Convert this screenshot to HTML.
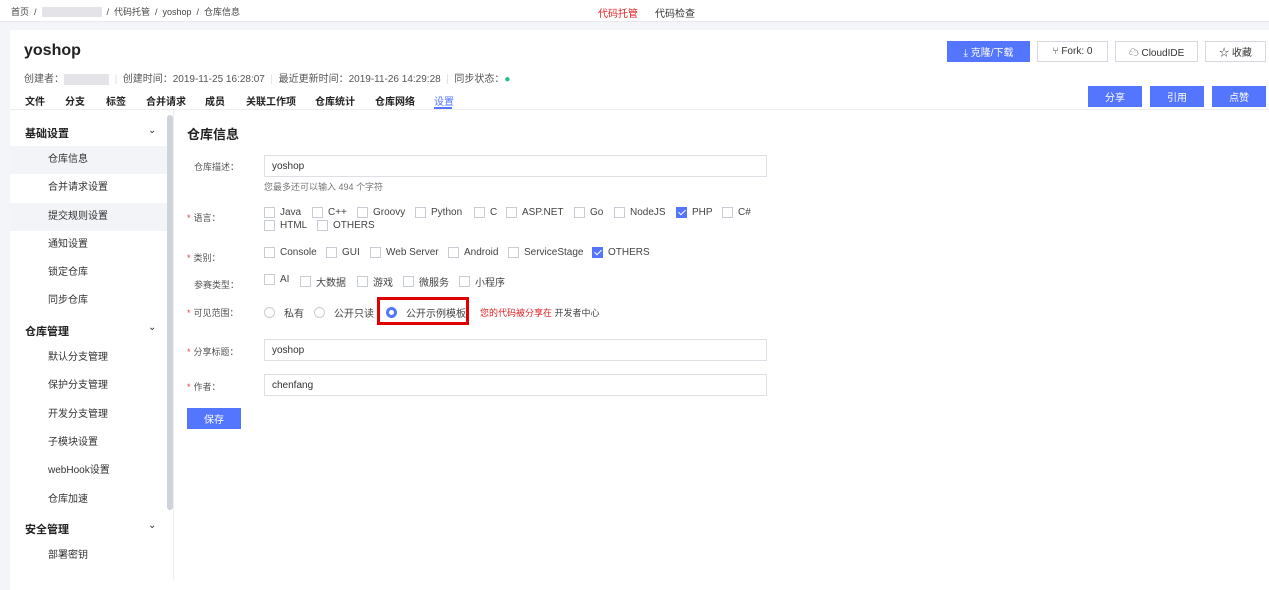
<!DOCTYPE html>
<html><head><meta charset="utf-8"><style>
*{margin:0;padding:0;box-sizing:border-box}
body{width:1269px;height:590px;background:#f3f5f8;font-family:"Liberation Sans","Noto Sans CJK SC",sans-serif;font-size:10px;color:#333;position:relative;overflow:hidden}
.a{position:absolute;white-space:nowrap}
.top{position:absolute;left:0;top:0;width:1269px;height:22px;background:#fff;border-bottom:1px solid #e8eaef}
.card{position:absolute;left:10px;top:30px;width:1259px;height:560px;background:#fff}
.btn{position:absolute;height:21px;border:1px solid #d6d9e0;background:#fff;font-size:10px;display:flex;align-items:center;justify-content:center;gap:4px;color:#333}
.pb{background:#5476ff;border-color:#5476ff;color:#fff}
.tab{position:absolute;top:93px;font-size:10px;font-weight:bold;color:#222}
.si{position:absolute;left:10px;width:157px;height:28px;line-height:28px;padding-left:38px;font-size:10px;color:#333}
.sh{position:absolute;left:15px;font-size:11px;font-weight:bold;color:#222}
.lab{position:absolute;left:187px;font-size:9px;color:#555}
.lab b{color:#f5333f;font-weight:normal;margin-right:3px}
.inp{position:absolute;left:264px;width:503px;height:22px;border:1px solid #dcdfe6;padding-left:7px;display:flex;align-items:center;font-size:10px;color:#333}
.cb{position:absolute;font-size:10px;color:#444;display:flex;align-items:center}
.cb i{display:inline-block;width:11px;height:11px;border:1px solid #c8ccd4;margin-right:5px;background:#fff}
.cb i.on{background:#5476ff;border-color:#5476ff;position:relative}
.cb i.on:after{content:"";position:absolute;left:3px;top:0px;width:3px;height:6px;border:solid #fff;border-width:0 1.5px 1.5px 0;transform:rotate(45deg)}
.rd{display:inline-block;width:11px;height:11px;border:1px solid #c8ccd4;border-radius:50%;margin-right:9px}
</style></head><body>
<div class="top"></div>
<div class="a" style="left:11px;top:5px;font-size:9px;color:#444">首页 &nbsp;/&nbsp; <span style="color:#ccc;background:#e4e4e8">&nbsp;&nbsp;&nbsp;&nbsp;&nbsp;&nbsp;&nbsp;&nbsp;&nbsp;&nbsp;&nbsp;&nbsp;&nbsp;&nbsp;&nbsp;&nbsp;&nbsp;&nbsp;&nbsp;&nbsp;&nbsp;&nbsp;&nbsp;&nbsp;</span> &nbsp;/&nbsp; 代码托管 &nbsp;/&nbsp; yoshop &nbsp;/&nbsp; 仓库信息</div>
<div class="a" style="left:598px;top:5px;font-size:10px;color:#e02020">代码托管</div>
<div class="a" style="left:655px;top:5px;font-size:10px;color:#333">代码检查</div>
<div class="card"></div>
<div class="a" style="left:24px;top:42px;font-size:16px;font-weight:bold;color:#222">yoshop</div>
<div class="a" style="left:24px;top:70px;font-size:10px;color:#555">创建者：<span style="background:#e4e4e8;color:#e4e4e8">xxxxxxxxx</span> &nbsp;<span style="color:#ddd">|</span>&nbsp; 创建时间：2019-11-25 16:28:07 &nbsp;<span style="color:#ddd">|</span>&nbsp; 最近更新时间：2019-11-26 14:29:28 &nbsp;<span style="color:#ddd">|</span>&nbsp; 同步状态：<span style="color:#20c080">●</span></div>
<div class="tab" style="left:25px">文件</div><div class="tab" style="left:65px">分支</div><div class="tab" style="left:106px">标签</div><div class="tab" style="left:146px">合并请求</div><div class="tab" style="left:205px">成员</div><div class="tab" style="left:246px">关联工作项</div><div class="tab" style="left:315px">仓库统计</div><div class="tab" style="left:375px">仓库网络</div>
<div class="tab" style="left:434px;color:#5476ff;font-weight:normal">设置</div>
<div class="a" style="left:434px;top:107px;width:18px;height:2px;background:#5476ff"></div>
<div class="a" style="left:10px;top:109px;width:1259px;height:1px;background:#eceef2"></div>
<div class="btn pb" style="left:947px;top:41px;width:83px">⤓ 克隆/下载</div>
<div class="btn" style="left:1037px;top:41px;width:71px">⑂ Fork: 0</div>
<div class="btn" style="left:1115px;top:41px;width:83px">☁ CloudIDE</div>
<div class="btn" style="left:1205px;top:41px;width:61px">☆ 收藏</div>
<div class="btn pb" style="left:1088px;top:86px;width:54px">分享</div>
<div class="btn pb" style="left:1150px;top:86px;width:54px">引用</div>
<div class="btn pb" style="left:1212px;top:86px;width:54px">点赞</div>
<div class="a" style="left:167px;top:115px;width:6px;height:395px;background:#cfd3da;border-radius:3px"></div>
<div class="a" style="left:173px;top:110px;width:1px;height:470px;background:#eceef2"></div>
<div class="sh" style="left:25px;top:125px">基础设置</div><div class="a" style="left:148px;top:125px;font-size:10px">⌄</div>
<div class="si" style="top:146px;background:#f2f4f7">仓库信息</div>
<div class="si" style="top:174px">合并请求设置</div>
<div class="si" style="top:203px;background:#f2f4f7">提交规则设置</div>
<div class="si" style="top:231px">通知设置</div>
<div class="si" style="top:259px">锁定仓库</div>
<div class="si" style="top:287px">同步仓库</div>
<div class="sh" style="left:25px;top:323px">仓库管理</div><div class="a" style="left:148px;top:322px;font-size:10px">⌄</div>
<div class="si" style="top:344px">默认分支管理</div>
<div class="si" style="top:372px">保护分支管理</div>
<div class="si" style="top:401px">开发分支管理</div>
<div class="si" style="top:429px">子模块设置</div>
<div class="si" style="top:457px">webHook设置</div>
<div class="si" style="top:486px">仓库加速</div>
<div class="sh" style="left:25px;top:521px">安全管理</div><div class="a" style="left:148px;top:520px;font-size:10px">⌄</div>
<div class="si" style="top:542px">部署密钥</div>
<div class="a" style="left:187px;top:124px;font-size:13px;font-weight:bold;color:#222">仓库信息</div>
<div class="lab" style="left:194px;top:160px">仓库描述：</div>
<div class="inp" style="top:155px">yoshop</div>
<div class="a" style="left:264px;top:180px;font-size:9px;color:#777">您最多还可以输入 494 个字符</div>
<div class="lab" style="top:211px"><b>*</b>语言：</div>
<div class="cb" style="left:264px;top:207px"><i></i>Java</div>
<div class="cb" style="left:312px;top:207px"><i></i>C++</div>
<div class="cb" style="left:357px;top:207px"><i></i>Groovy</div>
<div class="cb" style="left:415px;top:207px"><i></i>Python</div>
<div class="cb" style="left:474px;top:207px"><i></i>C</div>
<div class="cb" style="left:506px;top:207px"><i></i>ASP.NET</div>
<div class="cb" style="left:574px;top:207px"><i></i>Go</div>
<div class="cb" style="left:614px;top:207px"><i></i>NodeJS</div>
<div class="cb" style="left:676px;top:207px"><i class="on"></i>PHP</div>
<div class="cb" style="left:722px;top:207px"><i></i>C#</div>
<div class="cb" style="left:264px;top:220px"><i></i>HTML</div>
<div class="cb" style="left:317px;top:220px"><i></i>OTHERS</div>
<div class="lab" style="top:251px"><b>*</b>类别：</div>
<div class="cb" style="left:264px;top:247px"><i></i>Console</div>
<div class="cb" style="left:326px;top:247px"><i></i>GUI</div>
<div class="cb" style="left:370px;top:247px"><i></i>Web Server</div>
<div class="cb" style="left:448px;top:247px"><i></i>Android</div>
<div class="cb" style="left:508px;top:247px"><i></i>ServiceStage</div>
<div class="cb" style="left:592px;top:247px"><i class="on"></i>OTHERS</div>
<div class="lab" style="left:194px;top:278px">参赛类型：</div>
<div class="cb" style="left:264px;top:274px"><i></i>AI</div>
<div class="cb" style="left:300px;top:274px"><i></i>大数据</div>
<div class="cb" style="left:357px;top:274px"><i></i>游戏</div>
<div class="cb" style="left:403px;top:274px"><i></i>微服务</div>
<div class="cb" style="left:459px;top:274px"><i></i>小程序</div>
<div class="lab" style="top:306px"><b>*</b>可见范围：</div>
<div class="cb" style="left:264px;top:305px"><span class="rd"></span>私有</div>
<div class="cb" style="left:314px;top:305px"><span class="rd"></span>公开只读</div>
<div class="a" style="left:377px;top:297px;width:92px;height:28px;border:3px solid #e00000"></div>
<div class="cb" style="left:386px;top:305px"><span class="rd" style="border:3px solid #5476ff;background:#fff"></span>公开示例模板</div>
<div class="a" style="left:480px;top:306px;font-size:9px;color:#e02020">您的代码被分享在 <span style="color:#444">开发者中心</span></div>
<div class="lab" style="top:345px"><b>*</b>分享标题：</div>
<div class="inp" style="top:339px">yoshop</div>
<div class="lab" style="top:380px"><b>*</b>作者：</div>
<div class="inp" style="top:374px">chenfang</div>
<div class="btn pb" style="left:187px;top:408px;width:54px">保存</div>
</body></html>
